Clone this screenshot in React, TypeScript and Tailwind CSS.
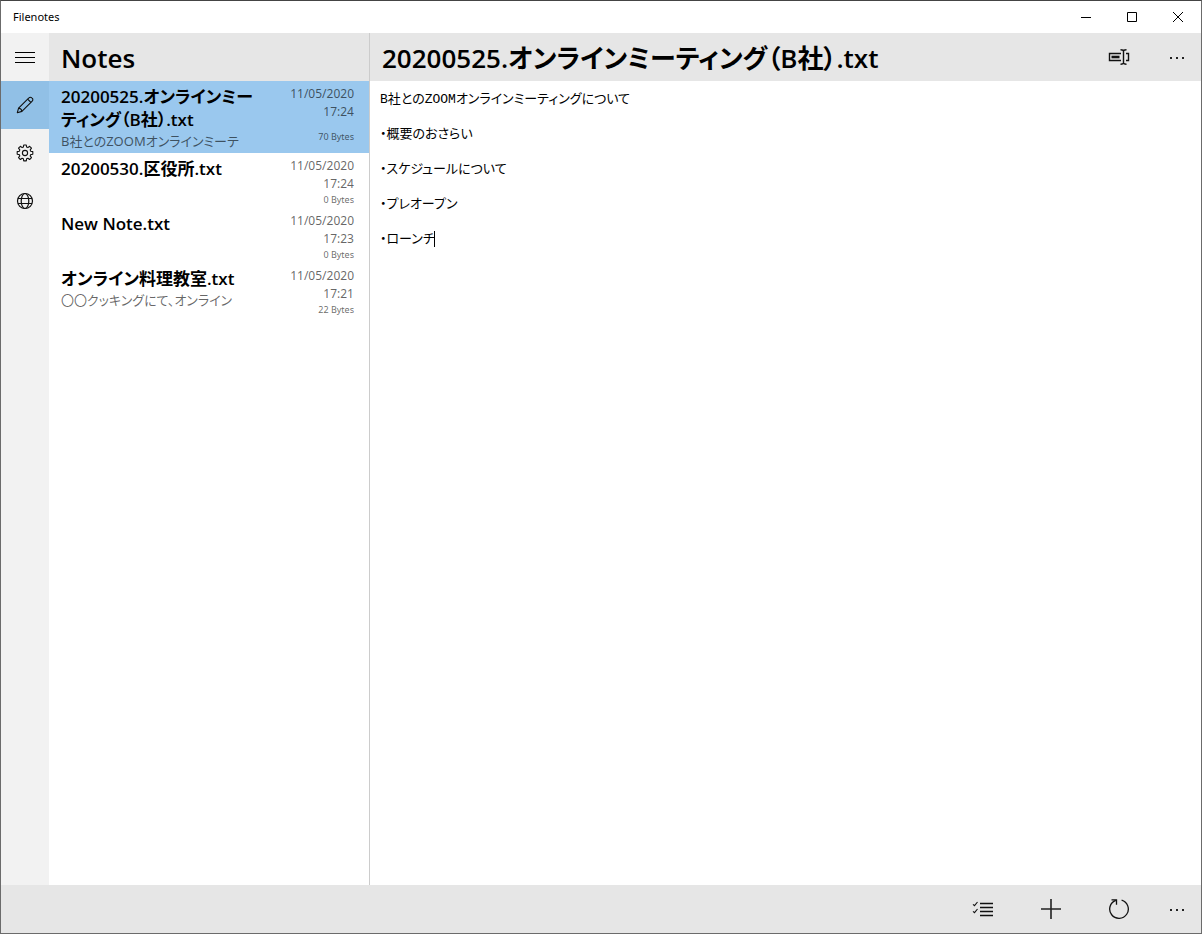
import { useState } from "react";

type Note = {
  name: string;
  preview: string;
  date: string;
  time: string;
  size: string;
};

const notes: Note[] = [
  {
    name: "20200525.オンラインミーティング（B社）.txt",
    preview: "B社とのZOOMオンラインミーテ",
    date: "11/05/2020",
    time: "17:24",
    size: "70 Bytes",
  },
  {
    name: "20200530.区役所.txt",
    preview: "",
    date: "11/05/2020",
    time: "17:24",
    size: "0 Bytes",
  },
  {
    name: "New Note.txt",
    preview: "",
    date: "11/05/2020",
    time: "17:23",
    size: "0 Bytes",
  },
  {
    name: "オンライン料理教室.txt",
    preview: "〇〇クッキングにて、オンライン",
    date: "11/05/2020",
    time: "17:21",
    size: "22 Bytes",
  },
];

const body = [
  "B社とのZOOMオンラインミーティングについて",
  "・概要のおさらい",
  "・スケジュールについて",
  "・プレオープン",
  "・ローンチ",
].join("\n");

function MenuIcon() {
  return (
    <svg width="20" height="20" viewBox="0 0 20 20" stroke="#000" shapeRendering="crispEdges">
      <path d="M0 5.5h20M0 10.5h20M0 15.5h20" />
    </svg>
  );
}

function PencilIcon() {
  return (
    <svg width="18" height="18" viewBox="0 0 18 18" fill="none" stroke="#111" strokeWidth="1.1" strokeLinejoin="round">
      <path d="M1.3 16.7l1.3-4.6L12.9 1.8a2 2 0 0 1 2.9 0l.4.4a2 2 0 0 1 0 2.9L5.9 15.4z" />
      <path d="M2.6 12.1c1.8.2 3.1 1.5 3.3 3.3M11.6 3.1l3.3 3.3" />
    </svg>
  );
}

function GearIcon() {
  return (
    <svg width="18" height="18" viewBox="0 0 18 18" fill="none" stroke="#111" strokeWidth="1.1" strokeLinejoin="round">
      <path d="M7.7 1h2.6l.3 2.1 1.3.5 1.7-1.3 1.9 1.9-1.3 1.7.5 1.3 2.1.4v2.6l-2.1.4-.5 1.3 1.3 1.7-1.9 1.9-1.7-1.3-1.3.6-.3 2.1H7.7l-.3-2.1-1.3-.6-1.7 1.3-1.9-1.9 1.3-1.7-.5-1.3-2.1-.4V7.6l2.1-.4.5-1.3-1.3-1.7 1.9-1.9 1.7 1.3 1.3-.5z" />
      <circle cx="9" cy="9" r="2.6" />
    </svg>
  );
}

function GlobeIcon() {
  return (
    <svg width="18" height="18" viewBox="0 0 18 18" fill="none" stroke="#111" strokeWidth="1.2">
      <circle cx="9" cy="9" r="7.5" />
      <ellipse cx="9" cy="9" rx="3.8" ry="7.5" />
      <path d="M2 6.5h14M2 11.5h14" />
    </svg>
  );
}

function RenameIcon() {
  return (
    <svg width="22" height="18" viewBox="0 0 22 18" fill="none" stroke="#111">
      <path d="M13 5.5H1.5v7H13M18 5.5h2.5v7H18" strokeWidth="1.4" />
      <path d="M3.5 9h8" strokeWidth="2.6" />
      <path d="M12.5 1.8c1.6 0 3 .2 3 1.4 0-1.2 1.4-1.4 3-1.4M12.5 16.2c1.6 0 3-.2 3-1.4 0 1.2 1.4 1.4 3 1.4M15.5 3v12" strokeWidth="1.4" />
    </svg>
  );
}

function MoreIcon() {
  return (
    <svg width="16" height="4" viewBox="0 0 16 4" fill="#222" shapeRendering="crispEdges">
      <path d="M1 2h2v2H1zM7 2h2v2H7zM13 2h2v2h-2z" />
    </svg>
  );
}

function ChecklistIcon() {
  return (
    <svg width="22" height="18" viewBox="0 0 22 18" fill="none" stroke="#111">
      <path d="M8 3.5h13M8 7.5h13M8 11.5h13M8 15.5h13" strokeWidth="1.4" />
      <path d="M1 4.3l1.5 1.3 3-3.6M1 11.3l1.5 1.3 3-3.6" strokeWidth="1.1" />
    </svg>
  );
}

function PlusIcon() {
  return (
    <svg width="20" height="20" viewBox="0 0 20 20" stroke="#222" strokeWidth="1.6">
      <path d="M10 0v20M0 10h20" />
    </svg>
  );
}

function RefreshIcon() {
  return (
    <svg width="22" height="22" viewBox="0 0 22 22" fill="none" stroke="#111" strokeWidth="1.3">
      <path d="M13.6 2.1A9.3 9.3 0 1 1 7.8 2.3" />
      <path d="M3.5 1.8h5v5" />
    </svg>
  );
}

const railItems = [
  { label: "Notes", icon: <PencilIcon /> },
  { label: "Settings", icon: <GearIcon /> },
  { label: "Web", icon: <GlobeIcon /> },
];

export default function App() {
  const [selected, setSelected] = useState(0);
  const [section, setSection] = useState(0);
  const [text, setText] = useState(body);

  return (
    <div
      lang="ja"
      className="flex h-screen flex-col border border-[#6b6b6b] border-t-[#444] bg-white font-['Noto_Sans','Noto_Sans_CJK_JP',sans-serif] text-black [font-feature-settings:'palt']"
    >
      <div className="flex h-8 shrink-0 items-center">
        <span className="flex-1 pl-3 text-[11px] leading-4">Filenotes</span>
        <button aria-label="Minimize" className="grid h-8 w-[46px] place-items-center">
          <svg width="10" height="10" viewBox="0 0 10 10" stroke="#000">
            <path d="M0 5.5h10" />
          </svg>
        </button>
        <button aria-label="Maximize" className="grid h-8 w-[46px] place-items-center">
          <svg width="10" height="10" viewBox="0 0 10 10" fill="none" stroke="#000">
            <path d="M.5.5h9v9h-9z" />
          </svg>
        </button>
        <button aria-label="Close" className="grid h-8 w-[46px] place-items-center">
          <svg width="10" height="10" viewBox="0 0 10 10" stroke="#000">
            <path d="M0 0l10 10M10 0L0 10" />
          </svg>
        </button>
      </div>

      <div className="flex min-h-0 flex-1">
        <nav className="flex w-12 shrink-0 flex-col bg-[#f2f2f2]">
          <button aria-label="Menu" className="grid h-12 place-items-center">
            <MenuIcon />
          </button>
          {railItems.map((item, i) => (
            <button
              key={item.label}
              aria-label={item.label}
              onClick={() => setSection(i)}
              className={`grid h-12 place-items-center ${i === section ? "bg-[#91c0e6]" : ""}`}
            >
              {item.icon}
            </button>
          ))}
        </nav>

        <aside className="flex w-[321px] shrink-0 flex-col border-r border-[#ccc]">
          <h1 className="h-12 bg-[#e6e6e6] pl-3 font-['Open_Sans',sans-serif] text-[26px] leading-[50px] font-semibold">
            Notes
          </h1>
          {notes.map((note, i) => (
            <button
              key={note.name}
              onClick={() => setSelected(i)}
              className={`flex pt-1 pr-[15px] pb-px pl-3 text-left ${i === selected ? "bg-[#9ac8ee]" : ""}`}
            >
              <span className="w-[196px] shrink-0">
                <span className="block font-['Open_Sans','Noto_Sans_CJK_JP',sans-serif] text-[17px] leading-[23px] font-semibold break-all">
                  {note.name}
                </span>
                <span className="block text-[13px] leading-[21px] whitespace-nowrap text-black/60">
                  {note.preview}
                </span>
              </span>
              <span className="flex flex-1 flex-col self-stretch text-right text-black/60">
                <span className="text-[12px] leading-[18px]">{note.date}</span>
                <span className="text-[12px] leading-[18px]">{note.time}</span>
                <span className="my-auto text-[9px] leading-[14px]">{note.size}</span>
              </span>
            </button>
          ))}
        </aside>

        <main className="flex min-w-0 flex-1 flex-col">
          <header className="flex h-12 shrink-0 bg-[#e6e6e6]">
            <h2 className="min-w-0 flex-1 truncate pl-3 font-['Open_Sans','Noto_Sans_CJK_JP',sans-serif] text-[26px] leading-[50px] font-semibold">
              {notes[selected].name}
            </h2>
            <button aria-label="Rename" className="grid w-[68px] place-items-center">
              <RenameIcon />
            </button>
            <button aria-label="More" className="grid w-12 place-items-center">
              <MoreIcon />
            </button>
          </header>
          <div className="relative flex flex-1">
            <textarea
              aria-label="Note text"
              value={text}
              onChange={(e) => setText(e.target.value)}
              spellCheck={false}
              className="flex-1 resize-none px-2.5 pt-px font-['Liberation_Mono','Noto_Sans_CJK_JP',monospace] text-[13px] leading-[35px] outline-none [font-feature-settings:'palt']"
            />
            <span className="absolute top-[150px] left-[64px] h-4 w-px bg-black" />
          </div>
        </main>
      </div>

      <footer className="flex h-12 shrink-0 justify-end bg-[#e6e6e6]">
        <button aria-label="Select" className="grid w-[68px] place-items-center">
          <ChecklistIcon />
        </button>
        <button aria-label="New note" className="grid w-[68px] place-items-center">
          <PlusIcon />
        </button>
        <button aria-label="Refresh" className="grid w-[68px] place-items-center">
          <RefreshIcon />
        </button>
        <button aria-label="More" className="grid w-12 place-items-center">
          <MoreIcon />
        </button>
      </footer>
    </div>
  );
}
